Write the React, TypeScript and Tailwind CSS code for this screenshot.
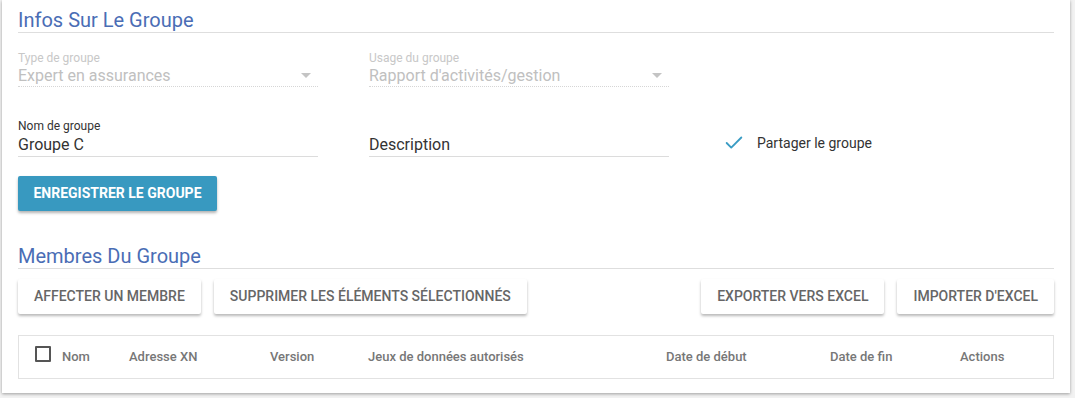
import { Check } from "lucide-react";

function Select({ label, value }: { label: string; value: string }) {
  return (
    <div className="w-[300px] flex flex-col">
      <span className="text-[12px] leading-[14px] text-[#c8c8c8]">{label}</span>
      <div className="flex items-center justify-between h-[22px] border-b border-dotted border-[#d6d6d6]">
        <span className="text-[16px] leading-[20px] text-[#c0c0c0]">{value}</span>
        <span className="mr-[7px] w-0 h-0 border-l-[5px] border-r-[5px] border-t-[5px] border-l-transparent border-r-transparent border-t-[#c4c4c4]" />
      </div>
    </div>
  );
}

function Field({ label, value }: { label?: string; value: string }) {
  return (
    <div className="w-[300px] flex flex-col">
      <span className="text-[12px] leading-[14px] h-[14px] text-[#333]">{label}</span>
      <div className="h-[24px] border-b border-[#dcdcdc]">
        <span className="text-[16px] leading-[20px] text-[#333]">{value}</span>
      </div>
    </div>
  );
}

function Btn({ children }: { children: string }) {
  return (
    <button className="h-[35px] px-4 bg-white rounded-[2px] shadow-[0_2px_3px_rgba(0,0,0,0.28)] text-[14px] font-medium text-[#666] uppercase">
      {children}
    </button>
  );
}

export default function App() {
  const cols = [
    { t: "Nom", w: "w-[67px]" },
    { t: "Adresse XN", w: "w-[141px]" },
    { t: "Version", w: "w-[98px]" },
    { t: "Jeux de données autorisés", w: "w-[298px]" },
    { t: "Date de début", w: "w-[164px]" },
    { t: "Date de fin", w: "w-[130px]" },
    { t: "Actions", w: "w-[60px]" },
  ];
  return (
    <div className="w-[1075px] h-[398px] bg-[#f2f2f2] font-['Roboto',sans-serif]">
      <div className="ml-[2px] w-[1068px] h-[393px] bg-white shadow-[0_1px_3px_rgba(0,0,0,0.35)] pl-4 pr-4">
        <div className="pt-[8px] h-[33px] border-b border-[#dedede]">
          <h2 className="text-[20px] leading-[24px] text-[#4a6db5]">Infos Sur Le Groupe</h2>
        </div>
        <div className="flex gap-[51px] mt-[18px]">
          <Select label="Type de groupe" value="Expert en assurances" />
          <Select label="Usage du groupe" value="Rapport d'activités/gestion" />
        </div>
        <div className="flex gap-[51px] mt-[32px] items-end">
          <Field label="Nom de groupe" value="Groupe C" />
          <Field value="Description" />
          <div className="flex items-center gap-[12px] mb-[3px] ml-[3px]">
            <Check size={22} strokeWidth={2} className="text-[#3a9cc4]" />
            <span className="text-[14px] text-[#333]">Partager le groupe</span>
          </div>
        </div>
        <button className="mt-[19px] h-[35px] w-[199px] bg-[#3899c0] rounded-[2px] shadow-[0_2px_3px_rgba(0,0,0,0.3)] text-white text-[14px] font-bold uppercase">
          Enregistrer le groupe
        </button>
        <div className="mt-[34px] h-[24px] border-b border-[#dedede]">
          <h2 className="text-[20px] leading-[22px] text-[#4a6db5]">Membres Du Groupe</h2>
        </div>
        <div className="flex mt-[10px] gap-[13px]">
          <Btn>Affecter un membre</Btn>
          <Btn>Supprimer les éléments sélectionnés</Btn>
          <div className="flex-1" />
          <Btn>Exporter vers Excel</Btn>
          <Btn>Importer d'Excel</Btn>
        </div>
        <div className="mt-[21px] h-[44px] border border-[#e2e2e2] flex items-center pl-[16px]">
          <span className="w-[16px] h-[16px] border-2 border-[#555] rounded-[1px] mr-[11px] -mt-[6px]" />
          {cols.map((c) => (
            <span key={c.t} className={`${c.w} shrink-0 text-[13px] font-medium text-[#777]`}>
              {c.t}
            </span>
          ))}
        </div>
      </div>
    </div>
  );
}
